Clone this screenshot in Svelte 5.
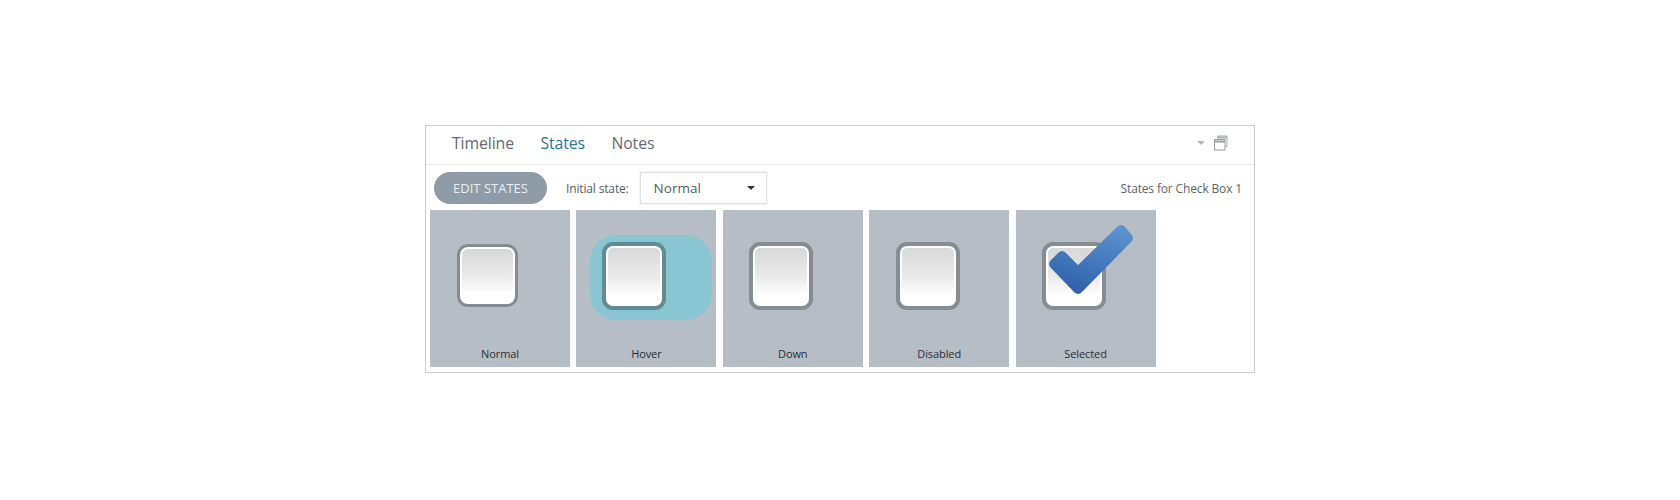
<script>
  const states = ['normal', 'hover', 'down', 'disabled', 'selected'];
  const label = (s) => s[0].toUpperCase() + s.slice(1);
</script>

<div class="panel">
  <header class="tabs">
    <nav class="tablist">
      <span class="tab">Timeline</span>
      <span class="tab active">States</span>
      <span class="tab">Notes</span>
    </nav>
    <div class="tools">
      <span class="caret small"></span>
      <svg class="win" width="14" height="16" viewBox="0 0 14 16" aria-hidden="true">
        <path d="M3.5 3.5V1h9.5v10.5h-2" fill="none" stroke="#a9adb1" stroke-width="1" />
        <path d="M3.5 2.5h9.5" stroke="#a9adb1" stroke-width="2" />
        <rect x="0.5" y="4.5" width="10.5" height="10.5" fill="#fff" stroke="#9a9ea3" />
        <path d="M0.5 6.5h10.5" stroke="#9a9ea3" stroke-width="2" />
      </svg>
    </div>
  </header>

  <div class="toolbar">
    <button class="edit">EDIT STATES</button>
    <span class="initial">Initial state:</span>
    <div class="select">
      <span>Normal</span>
      <span class="caret"></span>
    </div>
    <span class="for">States for Check Box 1</span>
  </div>

  <div class="cards">
    {#each states as s}
      <div class="card {s}">
        <div class="stage">
          <div class="halo">
            <div class="box">
              {#if s === 'selected'}
                <svg class="check" width="92" height="80" viewBox="0 0 92 80" aria-hidden="true">
                  <defs>
                    <linearGradient id="chk" x1="0.7" y1="0" x2="0.35" y2="1">
                      <stop offset="0" stop-color="#5b93cf" />
                      <stop offset="1" stop-color="#2f5fa9" />
                    </linearGradient>
                  </defs>
                  <path
                    d="M6 38 L13 31 Q17 27 21 31 L33 43 L72 5 Q76 1 80 5 L86 12 Q90 16 86 20 L37 70 Q33 74 29 70 L6 46 Q2 42 6 38 Z"
                    fill="url(#chk)"
                  />
                </svg>
              {/if}
            </div>
          </div>
        </div>
        <span class="name">{label(s)}</span>
      </div>
    {/each}
  </div>
</div>

<style>
  :global(body) {
    margin: 0;
    background: #fff;
  }
  .panel {
    box-sizing: border-box;
    width: 830px;
    height: 248px;
    margin: 125px 0 0 425px;
    border: 1px solid #c9cbcd;
    font-family: "Open Sans", "Noto Sans", sans-serif;
    display: flex;
    flex-direction: column;
  }
  .tabs {
    height: 39px;
    flex: none;
    box-sizing: border-box;
    border-bottom: 1px solid #e8e9ea;
    display: flex;
    align-items: center;
    justify-content: space-between;
    padding: 0 26px 4px 26px;
  }
  .tablist {
    display: flex;
    gap: 26.5px;
  }
  .tab {
    font-size: 15.8px;
    color: #5f6a73;
    letter-spacing: -0.1px;
  }
  .tab.active {
    color: #2f7196;
  }
  .tools {
    display: flex;
    align-items: center;
    gap: 9px;
  }
  .caret {
    width: 0;
    height: 0;
    border-left: 4px solid transparent;
    border-right: 4px solid transparent;
    border-top: 4px solid #333;
  }
  .caret.small {
    border-top-color: #b4b8bb;
  }
  .win {
    display: block;
  }
  .toolbar {
    height: 45px;
    flex: none;
    box-sizing: border-box;
    display: flex;
    align-items: center;
    padding: 1px 12px 0 8px;
  }
  .edit {
    width: 113px;
    height: 32px;
    border: none;
    padding: 0;
    border-radius: 16px;
    background: #8f9ba6;
    color: #e9edf0;
    font: 13px "Open Sans", sans-serif;
  }
  .initial {
    margin-left: 19px;
    font-size: 12px;
    color: #555c63;
    letter-spacing: -0.15px;
  }
  .select {
    box-sizing: border-box;
    width: 127px;
    height: 32px;
    margin-left: 11px;
    border: 1px solid #dedfe0;
    box-shadow: 0 0 2px #e4e4e4;
    display: flex;
    align-items: center;
    justify-content: space-between;
    padding: 0 11px 0 13px;
    font-size: 13.5px;
    color: #555c63;
  }
  .for {
    margin-left: auto;
    font-size: 12px;
    color: #5d646a;
    letter-spacing: -0.15px;
  }
  .cards {
    display: flex;
    gap: 6.4px;
    padding-left: 4px;
  }
  .card {
    box-sizing: border-box;
    width: 140px;
    height: 157px;
    background: #b6bdc5;
    display: flex;
    flex-direction: column;
    justify-content: space-between;
    align-items: center;
  }
  .stage {
    align-self: stretch;
    display: flex;
    flex-direction: column;
    align-items: flex-start;
  }
  .halo {
    margin: 32px 0 0 26px;
  }
  .box {
    position: relative;
    box-sizing: border-box;
    width: 64px;
    height: 68px;
    border: 4px solid #858d94;
    border-radius: 11px;
    background: linear-gradient(#d6d6d6, #ececec 55%, #fff 82%);
    box-shadow: inset 0 0 0 2px #fff;
  }
  .normal .halo {
    margin: 34px 0 0 27px;
  }
  .normal .box {
    width: 61px;
    height: 63px;
    border-width: 3px;
  }
  .hover .halo {
    box-sizing: border-box;
    width: 122px;
    height: 85px;
    margin: 25px 0 0 14px;
    padding: 7px 0 0 12px;
    border-radius: 26px;
    background: #8ac6d2;
  }
  .hover .box {
    border-color: #5f8c97;
  }
  .disabled .halo {
    margin-left: 27px;
  }
  .check {
    position: absolute;
    left: -1px;
    top: -24px;
  }
  .name {
    font-size: 11px;
    color: #2c3136;
    margin-bottom: 6px;
    letter-spacing: -0.1px;
  }
</style>
